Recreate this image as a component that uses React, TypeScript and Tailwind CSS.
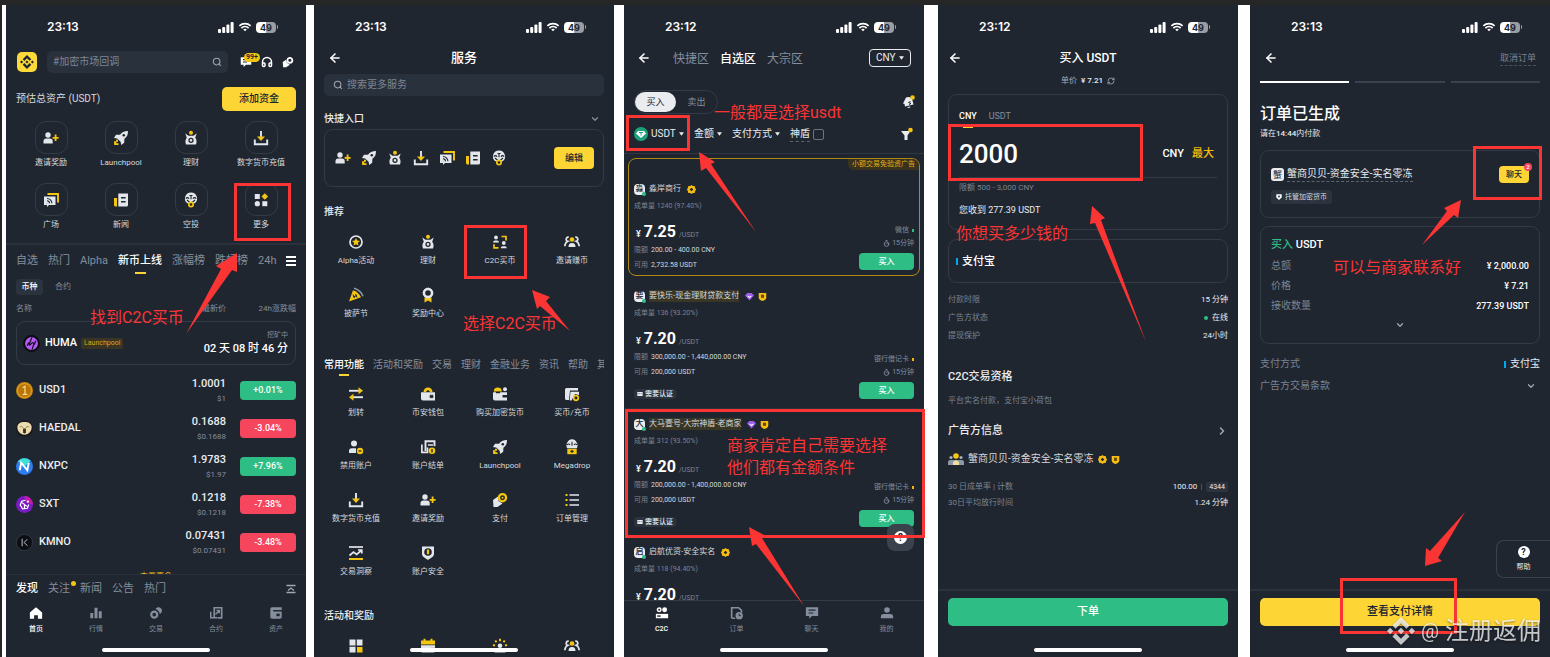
import type { ReactNode } from "react";
import { ArrowLeft, ChevronDown, ChevronRight, Headphones, RefreshCw, Search, Timer } from "lucide-react";
import { SiBinance } from "react-icons/si";

const W = "#e3e6ea";
const Y = "#f5c611";
const D = "#202630";

const glyphs: Record<string, ReactNode> = {
    invite: (
        <>
            <circle cx="5" cy="5" r="2.7" fill={W} />
            <path d="M0.5 13.5v-2.2a2.8 2.8 0 0 1 2.8-2.8h3.6a2.8 2.8 0 0 1 2.8 2.8v2.2z" fill={W} />
            <path d="M12.6 4.6v6.4M9.6 7.8h6" stroke={Y} strokeWidth="1.8" />
        </>
    ),
    rocket: (
        <>
            <path d="M15 1c-4 0-6 1.2-8 3.8L3 4.8 1 8l3.2.4 3.4 3.4.6 3.2 3-2.200.2-4C14 6.800 15 5 15 1z" fill={W} />
            <circle cx="10.8" cy="5.2" r="1.3" fill={D} />
            <path d="M1 11.2h2v-1.5h2v2h-1.6v1.6H5.500v1.700H1.200z" fill={Y} />
        </>
    ),
    bag: (
        <>
            <circle cx="8" cy="2.7" r="2" fill={Y} />
            <path d="M2.3 3.5l3.2 2.3h5l3.2-2.3-1.5 4.2c1.6 1.6 1.7 4.7.8 6.8H3c-.9-2.100-.8-5.200.8-6.800z" fill={W} />
            <circle cx="8" cy="10.3" r="2" fill={W} stroke={D} strokeWidth="1.3" />
        </>
    ),
    deposit: (
        <>
            <path d="M1.8 9.5v4.7h12.4V9.500" fill="none" stroke={W} strokeWidth="1.9" />
            <path d="M8 1v6" stroke={W} strokeWidth="1.9" />
            <path d="M4 6.5h8L8 11z" fill={Y} />
        </>
    ),
    feed: (
        <>
            <path d="M4.5 2h10.5v8.5" fill="none" stroke={Y} strokeWidth="1.9" />
            <path d="M1 4.5h11.5v8.5H6l-2 2v-2H1z" fill={W} />
            <path d="M4 11.3l.1-.1M4 8.8a2.4 2.4 0 0 1 2.5 2.5M4 6.5a4.8 4.8 0 0 1 4.9 4.8" fill="none" stroke={D} strokeWidth="1.1" />
        </>
    ),
    news: (
        <>
            <path d="M1 6h3v8.5H2.500A1.500 1.500 0 0 1 1 13z" fill={Y} />
            <path d="M5.3 1.5H15v11.500a1.500 1.500 0 0 1-1.500 1.500H5.300z" fill={W} />
            <path d="M8 5.8h4.6M8 9.800h4.600" stroke={D} strokeWidth="1.5" />
        </>
    ),
    airdrop: (
        <>
            <path d="M8 .5a6 6 0 0 1 3.8 10.7H4.200A6 6 0 0 1 8 .5z" fill={W} />
            <path d="M2.8 6.7c1.2-1.4 2.4-1.4 3.2 0M10 6.7c.8-1.4 2-1.4 3.2 0M6.5 3.5h3M8 3.3v4M4 8l2.8 2.5M12 8l-2.8 2.5" fill="none" stroke={D} strokeWidth="1.1" />
            <circle cx="8" cy="12.5" r="2.2" fill={D} stroke={Y} strokeWidth="1.7" />
        </>
    ),
    more: (
        <>
            <path d="M1.8 2h5v5h-5z" fill={W} />
            <circle cx="4.3" cy="11.7" r="2.6" fill={W} />
            <path d="M9.3 9.2h5v5h-5z" fill={W} />
            <path d="M11.8 1.2l3.3 3.3-3.3 3.3-3.3-3.3z" fill={Y} />
        </>
    ),
    alpha: (
        <>
            <circle cx="8" cy="8" r="6" fill="none" stroke={W} strokeWidth="1.7" />
            <path d="M8 4l1.2 2.6 2.8.3-2.1 1.9.6 2.8L8 10.200l-2.500 1.400.6-2.800L4 6.900l2.800-.3z" fill={Y} />
        </>
    ),
    c2c: (
        <>
            <circle cx="4" cy="3.5" r="1.9" fill={W} />
            <path d="M1 8.5a2 2 0 0 1 2-2h2a2 2 0 0 1 2 2z" fill={W} />
            <circle cx="11.8" cy="9" r="1.9" fill={W} />
            <path d="M8.8 14.2a2 2 0 0 1 2-2h2a2 2 0 0 1 2 2z" fill={W} />
            <path d="M9.5 2.5h4.5v4M6.5 13.8H2v-3.500" fill="none" stroke={Y} strokeWidth="1.7" />
        </>
    ),
    group: (
        <>
            <circle cx="8" cy="5.5" r="2.3" fill={Y} />
            <path d="M4.5 13c0-2.6 1-4 3.5-4s3.5 1.4 3.5 4z" fill={W} />
            <path d="M4.8 3.3a2 2 0 0 0-1 4C2 8 1 10 .8 12.3M11.2 3.3a2 2 0 0 1 1 4c1.8.7 2.8 2.7 3 5" fill="none" stroke={W} strokeWidth="1.7" />
        </>
    ),
    pizza: (
        <>
            <path d="M5 3.2L1 14.500l12-4.200C11.500 7 8.500 4.200 5 3.200z" fill={Y} />
            <path d="M6 1.2c4 1 7.5 4.2 9 8" fill="none" stroke="#8d97a6" strokeWidth="1.6" />
            <path d="M5 7.5l1.5 3.5M7.5 7l1.5 3.5M5 10l4-1.5" stroke={D} strokeWidth="1" />
        </>
    ),
    medal: (
        <>
            <path d="M4.5 10.5h7v5L8 13.500l-3.500 2z" fill={Y} />
            <circle cx="8" cy="6" r="4" fill={D} stroke={W} strokeWidth="2.4" />
            <circle cx="8" cy="6" r="4.9" fill="none" stroke={W} strokeWidth="1" strokeDasharray="1.5 1" />
        </>
    ),
    transfer: (
        <>
            <path d="M1 4.8h10" stroke={W} strokeWidth="1.9" />
            <path d="M10.5 1.3L15 4.800l-4.500 3.500z" fill={Y} />
            <path d="M15 11.2H5" stroke={W} strokeWidth="1.9" />
            <path d="M5.5 7.7L1 11.200l4.500 3.500z" fill={Y} />
        </>
    ),
    wallet: (
        <>
            <path d="M3.5 6a4.5 4.5 0 0 1 9 0" fill={Y} />
            <path d="M1 6.2h14v8.3H3a2 2 0 0 1-2-2z" fill={W} />
            <path d="M6.5 6a1.5 1.5 0 0 1 3 0M10 9.2h3v2.5h-3z" fill={D} stroke={D} strokeWidth=".6" />
        </>
    ),
    buy: (
        <>
            <path d="M1.8 5.5a4 4 0 0 1 8 0" fill={Y} />
            <circle cx="13" cy="3.2" r="2" fill={W} />
            <path d="M1 6.3h14v8.2H3a2 2 0 0 1-2-2z" fill={W} />
            <path d="M10.5 9h4.5v2.6h-4.500zM4 5.800h4v1.500H4z" fill={D} />
        </>
    ),
    card: (
        <>
            <path d="M1 3.5A1.500 1.500 0 0 1 2.500 2H14v2.500H6l-1 9.500H2.500A1.500 1.500 0 0 1 1 12.500z" fill={W} />
            <path d="M6.5 5.8H15V9l-4-1-3.500 6.500H5.700z" fill={W} />
            <circle cx="12" cy="12" r="2.3" fill={D} stroke={Y} strokeWidth="1.7" />
        </>
    ),
    disable: (
        <>
            <circle cx="6" cy="4.5" r="3" fill={W} />
            <path d="M1 14v-2a2.8 2.8 0 0 1 2.8-2.8H8V14z" fill={W} />
            <circle cx="12" cy="12" r="3.2" fill={Y} />
            <path d="M10.5 12h3" stroke={D} strokeWidth="1.2" />
        </>
    ),
    statement: (
        <>
            <path d="M5.5 12V2.200h9v5" fill="none" stroke={W} strokeWidth="1.9" />
            <path d="M1.9 5.5v7.8h5.6V8.500M8 6h5" fill="none" stroke={W} strokeWidth="1.7" />
            <circle cx="12" cy="11.8" r="3.3" fill={Y} />
            <path d="M12 10v3.5" stroke={D} strokeWidth="1.3" />
        </>
    ),
    megadrop: (
        <>
            <path d="M8 .3a6 6 0 0 1 4.2 9.7H3.800A6 6 0 0 1 8 .3z" fill={W} />
            <path d="M2.8 6c1.2-1.3 2.4-1.3 3.2 0M10 6c.8-1.3 2-1.3 3.2 0M8 2.8v4" fill="none" stroke={D} strokeWidth="1.1" />
            <path d="M3 9.5h10V15.500H3z" fill={Y} stroke={D} strokeWidth=".6" />
            <path d="M8 10.8v3.2M6.4 12.4h3.2" stroke={D} strokeWidth="1.1" />
        </>
    ),
    pay: (
        <>
            <path d="M1 8l5-3.5.5 4.5 4 2.5L5.500 15H1.500z" fill={W} />
            <circle cx="10.5" cy="5.7" r="3.6" fill={D} stroke={Y} strokeWidth="2.3" />
            <circle cx="10.5" cy="5.7" r="1" fill={Y} />
        </>
    ),
    list: (
        <>
            <path d="M5.5 3h9.5M5.5 8h9.5M5.5 13h9.5" stroke={W} strokeWidth="1.7" />
            <path d="M1.5 3h2M1.5 8h2M1.5 13h2" stroke={Y} strokeWidth="1.9" />
        </>
    ),
    insight: (
        <>
            <path d="M1 2h14" stroke={W} strokeWidth="1.7" />
            <path d="M1.5 10.5l4-3.5 3.2 2.5 4.5-4M10 5h3.8v3.5" fill="none" stroke={W} strokeWidth="1.7" />
            <path d="M1 14h14" stroke={Y} strokeWidth="2" />
        </>
    ),
    shield: (
        <>
            <path d="M2 1.5h12v7.8c0 2.2-3.5 4.2-6 5.7-2.5-1.5-6-3.5-6-5.7z" fill={W} />
            <circle cx="8" cy="7" r="3.8" fill={D} />
            <path d="M8 4.5v4.7" stroke={Y} strokeWidth="2.2" />
        </>
    ),
    blocks: (
        <>
            <path d="M1.5 1.5h6v6h-6zM8.8 1.5h5.7v6H8.800zM1.500 8.800h6v5.700h-6z" fill={W} />
            <path d="M9 9h5.5v5.5H9z" fill={Y} />
        </>
    ),
    calendar: (
        <>
            <path d="M1 2.5h14v4H1zM3.500.8h2v3h-2zM10.500.8h2v3h-2z" fill={Y} />
            <path d="M1 7.2h14V13a1.500 1.500 0 0 1-1.500 1.500h-11A1.500 1.500 0 0 1 1 13z" fill={W} />
            <path d="M11 10.5h5" stroke={D} strokeWidth="1.2" />
        </>
    ),
    spark: (
        <>
            <path d="M8 .8v2.5M3.3 2.5l1.2 1.8M12.7 2.5l-1.2 1.8M1 6.8l2 .8M15 6.8l-2 .8" stroke={Y} strokeWidth="1.9" />
            <circle cx="8" cy="7.7" r="2.3" fill={W} />
            <path d="M2.5 14.5a2.5 2.5 0 0 1 2.5-2.8h6a2.5 2.5 0 0 1 2.5 2.8z" fill={W} />
        </>
    ),
    // bottom bar, follows the text colour
    home: <path d="M8 1.5l7 6V14.500h-4.800v-4H5.800v4H1V7.500z" fill="currentColor" />,
    market: <path d="M1.5 8h3.3v6H1.500zM6.300 2h3.400v12H6.300zM11.200 6h3.300v8h-3.300z" fill="currentColor" />,
    trade: (
        <>
            <circle cx="6" cy="9.8" r="3.4" fill="none" stroke="currentColor" strokeWidth="2.6" />
            <path d="M7.5 3.5a3.9 3.9 0 1 1 4.8 5.5c-.3-2.5-2.2-4.6-4.8-5.5z" fill="currentColor" />
        </>
    ),
    futures: (
        <>
            <path d="M6 12.5V2h8.500v11.500h-4" fill="none" stroke="currentColor" strokeWidth="1.9" />
            <path d="M2 6.5v7h8M7.5 9.5l4-4M8.5 5h3.3v3.3" fill="none" stroke="currentColor" strokeWidth="1.7" />
        </>
    ),
    assets: (
        <>
            <path d="M1.5 3.5a2 2 0 0 1 2-2h11v3H4.800v1.700h9.700v6.300a2 2 0 0 1-2 2h-9a2 2 0 0 1-2-2z" fill="currentColor" />
            <path d="M8.5 8.7h3.7v3H8.500z" fill={D} />
        </>
    ),
    people: (
        <>
            <circle cx="4.8" cy="4.3" r="2" fill="none" stroke="currentColor" strokeWidth="1.7" />
            <circle cx="11" cy="4.3" r="2.8" fill="currentColor" />
            <path d="M1 9h14v5H1z" fill="currentColor" />
            <path d="M2.5 10.7h4v1.6h-4z" fill={D} />
        </>
    ),
    orders: (
        <>
            <path d="M1.9 14V2h8l3.200 3v2.500M1.900 14h4" fill="none" stroke="currentColor" strokeWidth="1.9" />
            <circle cx="10.5" cy="11" r="4.2" fill="currentColor" />
            <path d="M10.5 8.8V11h2" fill="none" stroke={D} strokeWidth="1.1" />
        </>
    ),
    chat: (
        <>
            <path d="M1 1.5h14v10H8l-3.200 3v-3H1z" fill="currentColor" />
            <path d="M4 4.8h8M4 8h5.5" stroke={D} strokeWidth="1.4" />
        </>
    ),
    me: (
        <>
            <circle cx="8" cy="4.5" r="3.2" fill="currentColor" />
            <path d="M1 14v-2a3 3 0 0 1 3-3h8a3 3 0 0 1 3 3v2z" fill="currentColor" />
        </>
    ),
};

function Glyph({ name, className = "size-4" }: { name: string; className?: string }) {
    return (
        <svg viewBox="0 0 16 16" className={`${className} shrink-0`} aria-hidden="true">
            {glyphs[name]}
        </svg>
    );
}

function StatusBar({ time }: { time: string }) {
    return (
        <div className="flex h-11 shrink-0 items-center justify-between pl-[41px] pr-7 text-white">
            <span className="font-['Inter',sans-serif] text-[12px] font-semibold leading-4">{time}</span>
            <div className="flex items-center gap-1">
                <svg viewBox="0 0 16 11" className="h-[11px] w-4" fill="currentColor">
                    <rect x="0" y="7" width="3" height="4" rx="1" />
                    <rect x="4.2" y="5" width="3" height="6" rx="1" />
                    <rect x="8.4" y="2.5" width="3" height="8.5" rx="1" />
                    <rect x="12.6" y="0" width="3" height="11" rx="1" />
                </svg>
                <svg viewBox="0 0 14 11" className="h-[10px] w-[14px]" fill="none" stroke="currentColor" strokeWidth="1.9">
                    <path d="M.8 4.2a9 9 0 0 1 12.4 0M3 6.7a5.8 5.8 0 0 1 8 0" />
                    <path d="M7 10.2L5 8.200a3 3 0 0 1 4 0z" fill="currentColor" stroke="none" />
                </svg>
                <span className="flex items-center">
                    <span className="flex h-[11px] w-5 items-center justify-center rounded-[4px] bg-gradient-to-r from-white from-50% to-[#9a9da3] to-50% font-['Inter',sans-serif] text-[9px] font-bold leading-[11px] text-[#202630]">
                        49
                    </span>
                    <span className="ml-px h-1 w-px rounded-r bg-[#9a9da3]" />
                </span>
            </div>
        </div>
    );
}

function Phone({ time, label, className = "", children }: { time: string; label: string; className?: string; children: ReactNode }) {
    return (
        <section aria-label={label} className={`relative flex min-w-0 flex-1 flex-col bg-[#202630] ${className}`}>
            <StatusBar time={time} />
            {children}
        </section>
    );
}

function BackButton() {
    return (
        <button aria-label="返回" className="text-white">
            <ArrowLeft className="size-[14px]" strokeWidth={2.6} />
        </button>
    );
}

function HomeBar() {
    return <div className="mx-auto h-1 w-[108px] rounded-full bg-white" />;
}

function RedBox({ className }: { className: string }) {
    return <div className={`pointer-events-none absolute z-20 border-[3px] border-[#fb3434] ${className}`} />;
}

function Note({ className, children }: { className: string; children: ReactNode }) {
    return (
        <p className={`absolute z-20 whitespace-nowrap text-[16px] leading-[22px] text-[#fb3434] ${className}`}>{children}</p>
    );
}

function Arrows({ shapes }: { shapes: string[] }) {
    return (
        <svg className="pointer-events-none absolute inset-0 z-20 size-full overflow-visible" fill="#fb3434" aria-hidden="true">
            {shapes.map((s) => (
                <polygon key={s} points={s} />
            ))}
        </svg>
    );
}

function Caret() {
    return (
        <svg viewBox="0 0 6 4" className="pointer-events-none h-1 w-[5px]" fill="#eaecef">
            <path d="M0 0h6L3 4z" />
        </svg>
    );
}

function Dropdown({ label, value }: { label: string; value: string }) {
    return (
        <span className="flex items-center gap-[3px]">
            <select aria-label={label} className="appearance-none bg-transparent text-[10px] leading-[14px] text-[#eaecef]">
                <option>{value}</option>
            </select>
            <Caret />
        </span>
    );
}

function BottomNav({ items, cols }: { items: [string, string][]; cols: string }) {
    return (
        <nav className={`grid ${cols}`}>
            {items.map(([icon, label], i) => (
                <a key={label} href="#" className={`flex flex-col items-center ${i === 0 ? "font-medium text-white" : "text-[#848e9c]"}`}>
                    <Glyph name={icon} className="size-[14px]" />
                    <span className="mt-1 text-[7px] leading-[10px]">{label}</span>
                </a>
            ))}
        </nav>
    );
}

/* ---------- screen 1: home ---------- */

const quickEntries: [string, string][] = [
    ["invite", "邀请奖励"],
    ["rocket", "Launchpool"],
    ["bag", "理财"],
    ["deposit", "数字货币充值"],
    ["feed", "广场"],
    ["news", "新闻"],
    ["airdrop", "空投"],
    ["more", "更多"],
];

const coins = [
    { name: "USD1", price: "1.0001", usd: "$1", change: "+0.01%" },
    { name: "HAEDAL", price: "0.1688", usd: "$0.1688", change: "-3.04%" },
    { name: "NXPC", price: "1.9783", usd: "$1.97", change: "+7.96%" },
    { name: "SXT", price: "0.1218", usd: "$0.1218", change: "-7.38%" },
    { name: "KMNO", price: "0.07431", usd: "$0.07431", change: "-3.48%" },
];

const coinLogos: Record<string, ReactNode> = {
    HUMA: (
        <>
            <circle cx="9" cy="9" r="9" fill="#0c0c14" />
            <circle cx="9" cy="9" r="6.8" fill="#b45cf0" />
            <path d="M9.5 2.5L7 8.500c-1 2.500 0 3 1.500 1s4-2 2.500 1.500l-1.500 4.500M4.500 11.500l1.500-3.500M12 10l1.500-4" stroke="#141020" strokeWidth="1.3" fill="none" />
        </>
    ),
    USD1: (
        <>
            <circle cx="9" cy="9" r="9" fill="#c8860d" />
            <circle cx="9" cy="9" r="7.3" fill="#b97606" stroke="#e8ad3a" strokeWidth=".8" />
            <path d="M7 6l2.5-1.5V13M7 13h5" stroke="#f9dc8a" strokeWidth="1.3" fill="none" />
        </>
    ),
    HAEDAL: (
        <>
            <circle cx="9" cy="9" r="9" fill="#1a1a1a" />
            <path d="M1.5 7c.5-3.500 3.500-5 7.500-5s7 1.500 7.500 5c.5 5-3 8.500-7.500 8.500S1 12 1.500 7z" fill="#ecdcb0" />
            <path d="M4 7.5c2-1.5 3-.5 3.5 1M14 7.5c-2-1.5-3-.5-3.5 1" stroke="#8c7a52" strokeWidth=".9" fill="none" />
            <path d="M7.5 9h3v4l-1.5 1.5-1.5-1.5z" fill="#3a3020" />
        </>
    ),
    NXPC: (
        <>
            <circle cx="9" cy="9" r="9" fill="#2d7cf0" />
            <path d="M2 3.5A9 9 0 0 1 15.500 3L9 9z" fill="#3fe0d0" />
            <path d="M4 13l1.5-8 6.5 8L13.500 5" stroke="#fff" strokeWidth="2" fill="none" />
        </>
    ),
    SXT: (
        <>
            <circle cx="9" cy="9" r="9" fill="#7a1cc4" />
            <path d="M9 0a9 9 0 0 1 9 9c-5 0-9-4-9-9z" fill="#c61aa8" />
            <path d="M10 4.5L6 5.500 4.500 9.500l2.500 4 5-.5 1.500-4M6.500 7l5 4M9 9v4" stroke="#fff" strokeWidth="1.3" fill="none" />
            <circle cx="12.5" cy="6" r="1.2" fill="#fff" />
        </>
    ),
    KMNO: (
        <>
            <circle cx="9" cy="9" r="8.5" fill="#0b0e12" stroke="#3a414c" strokeWidth=".8" />
            <path d="M6.5 5v8M12 5.5L8.500 9l3.800 3.500" stroke="#c8ccd2" strokeWidth="1" fill="none" />
        </>
    ),
};

function CoinLogo({ name }: { name: string }) {
    return (
        <svg viewBox="0 0 18 18" className="size-[17px] shrink-0" aria-hidden="true">
            {coinLogos[name]}
        </svg>
    );
}

function HomeScreen() {
    return (
        <Phone time="23:13" label="首页" className="ml-1">
            <div className="flex min-h-0 flex-1 flex-col overflow-hidden">
                <header className="mt-0.5 flex shrink-0 items-center pl-[11px] pr-3">
                    <span className="flex size-5 items-center justify-center rounded-[5px] bg-[#fdd93a] text-[#202630]">
                        <SiBinance className="size-[14px]" />
                    </span>
                    <label className="ml-[10px] mr-3 flex h-[22px] min-w-0 flex-1 items-center rounded-[5px] bg-[#29313d] px-1.5">
                        <input
                            aria-label="搜索"
                            placeholder="#加密市场回调"
                            className="min-w-0 flex-1 bg-transparent text-[10px] leading-[14px] placeholder:text-[#7d8694]"
                        />
                        <Search className="size-[10px] text-[#a0a8b4]" strokeWidth={2.5} />
                    </label>
                    <div className="flex items-center gap-[9px] text-white">
                        <button aria-label="消息" className="relative">
                            <Glyph name="chat" className="size-3" />
                            <span className="absolute -top-[3px] left-1 flex h-[9px] w-4 items-center justify-center rounded-full bg-[#f5c611] text-[7px] font-bold leading-[9px] text-[#202630]">
                                99+
                            </span>
                        </button>
                        <button aria-label="客服">
                            <Headphones className="size-3" strokeWidth={3} />
                        </button>
                        <button aria-label="支付">
                            <svg viewBox="0 0 16 16" className="size-3">
                                <path d="M1 8l4.5-3 1 4 4 2.5L5.500 15H1.500z" fill="#fff" />
                                <circle cx="10.5" cy="5.7" r="3.3" fill={D} stroke="#fff" strokeWidth="2.4" />
                            </svg>
                        </button>
                    </div>
                </header>

                <div className="mt-[14px] flex shrink-0 items-center justify-between px-[10px]">
                    <span className="text-[10px] leading-[14px] text-[#d5d9df]">预估总资产 (USDT)</span>
                    <button className="h-6 w-[74px] rounded-[5px] bg-[#fdd535] text-[10px] font-medium leading-[14px] text-[#202630]">
                        添加资金
                    </button>
                </div>

                <div className="mt-[10px] grid shrink-0 grid-cols-4 gap-y-[15px] px-[10px]">
                    {quickEntries.map(([icon, label]) => (
                        <a key={label} href="#" className="flex flex-col items-center text-[#d5d9df]">
                            <span className="flex size-[33px] items-center justify-center rounded-[11px] border border-[#333b47]">
                                <Glyph name={icon} />
                            </span>
                            <span className="mt-1 whitespace-nowrap text-[8px] leading-[10px]">{label}</span>
                        </a>
                    ))}
                </div>

                <div className="mt-[13px] h-0.5 shrink-0 bg-[#2a313c]" />

                <div className="mt-[9px] flex shrink-0 items-start gap-2 px-[10px]">
                    <div className="flex min-w-0 flex-1 gap-[10px] overflow-hidden whitespace-nowrap text-[11px] leading-[14px] text-[#848e9c]">
                        <button className="self-start">自选</button>
                        <button className="self-start">热门</button>
                        <button className="self-start">Alpha</button>
                        <button className="flex flex-col items-center font-medium text-white">
                            新币上线
                            <span className="mt-1 h-0.5 w-[11px] bg-[#fcd535]" />
                        </button>
                        <button className="self-start">涨幅榜</button>
                        <button className="self-start">跌幅榜</button>
                        <button className="self-start">24h</button>
                    </div>
                    <button aria-label="菜单" className="mt-0.5 flex w-[10px] flex-col gap-0.5">
                        <span className="h-0.5 bg-white" />
                        <span className="h-0.5 bg-white" />
                        <span className="h-0.5 bg-white" />
                    </button>
                </div>

                <div className="mt-[5px] flex shrink-0 items-center gap-3 px-[10px] text-[8px] leading-[10px]">
                    <button className="h-4 w-[27px] rounded-[4px] bg-[#2b333f] font-medium text-white">币种</button>
                    <button className="text-[#848e9c]">合约</button>
                </div>

                <div className="mt-2 shrink-0 px-[10px]">
                    <table className="w-full table-fixed">
                        <thead className="text-[8px] leading-3 text-[#848e9c]">
                            <tr>
                                <th className="p-0 pb-1.5 text-left font-normal">名称</th>
                                <th className="w-[80px] p-0 pb-1.5 text-right font-normal">最新价</th>
                                <th className="w-[70px] p-0 pb-1.5 text-right font-normal">24h涨跌幅</th>
                            </tr>
                        </thead>
                        <tbody>
                            <tr>
                                <td colSpan={3} className="p-0 pb-1.5">
                                    <div className="flex h-11 items-center rounded-[9px] border border-[#333b47] pl-1.5 pr-[7px]">
                                        <CoinLogo name="HUMA" />
                                        <span className="ml-[5px] text-[11px] font-medium leading-[14px] text-white">HUMA</span>
                                        <span className="ml-1 rounded-[2px] bg-[#3a3424] px-[3px] text-[7px] leading-[11px] text-[#d5aa10]">Launchpool</span>
                                        <span className="ml-auto flex flex-col items-end whitespace-nowrap">
                                            <span className="text-[7px] leading-[10px] text-[#848e9c]">挖矿中</span>
                                            <span className="mt-0.5 text-[11px] font-medium leading-[14px] text-white">02 天 08 时 46 分</span>
                                        </span>
                                    </div>
                                </td>
                            </tr>
                            {coins.map((c) => (
                                <tr key={c.name} className="h-[38px]">
                                    <td className="p-0">
                                        <span className="flex items-center gap-1.5 text-[11px] font-medium leading-[14px] text-[#eaecef]">
                                            <CoinLogo name={c.name} />
                                            {c.name}
                                        </span>
                                    </td>
                                    <td className="p-0 pt-0.5 text-right">
                                        <span className="block text-[11px] font-medium leading-[14px] text-[#eaecef]">{c.price}</span>
                                        <span className="mt-0.5 block text-[8px] leading-3 text-[#848e9c]">{c.usd}</span>
                                    </td>
                                    <td className="p-0">
                                        <span
                                            className={`ml-auto flex h-[19px] w-14 items-center justify-center rounded-[4px] text-[9px] font-medium leading-3 text-white ${
                                                c.change[0] === "+" ? "bg-[#2ebd85]" : "bg-[#f6465d]"
                                            }`}
                                        >
                                            {c.change}
                                        </span>
                                    </td>
                                </tr>
                            ))}
                        </tbody>
                    </table>
                </div>
                <a href="#" className="mx-auto mt-[10px] shrink-0 text-[8px] leading-3 text-[#f0b90b]">查看更多</a>
            </div>

            <footer className="shrink-0 border-t border-[#2a313c] bg-[#202630] pb-[5px]">
                <div className="mt-[7px] flex items-center gap-[10px] px-[10px] text-[11px] leading-[14px] text-[#848e9c]">
                    <button className="font-medium text-white">发现</button>
                    <button className="relative">
                        关注
                        <span className="absolute -right-1.5 -top-px size-[5px] rounded-full bg-[#f5c611]" />
                    </button>
                    <button>新闻</button>
                    <button>公告</button>
                    <button>热门</button>
                    <button aria-label="回到顶部" className="ml-auto">
                        <svg viewBox="0 0 10 10" className="size-[10px]" fill="none" stroke="#a0a8b4" strokeWidth="1.3">
                            <path d="M.5 1.5h9M.5 8.5h9M2 6.5l3-2.5 3 2.5" />
                        </svg>
                    </button>
                </div>
                <div className="mb-[14px] mt-[10px]">
                    <BottomNav
                        cols="grid-cols-5"
                        items={[
                            ["home", "首页"],
                            ["market", "行情"],
                            ["trade", "交易"],
                            ["futures", "合约"],
                            ["assets", "资产"],
                        ]}
                    />
                </div>
                <HomeBar />
            </footer>

            <RedBox className="left-[228px] top-[178px] h-[58px] w-[57px]" />
            <Note className="left-[84px] top-[302px]">找到C2C买币</Note>
            <Arrows shapes={["231,248 231,267 226,265 180,329 215,264 210,261"]} />
        </Phone>
    );
}

/* ---------- screen 2: services ---------- */

const recommended: [string, string][] = [
    ["alpha", "Alpha活动"],
    ["bag", "理财"],
    ["c2c", "C2C买币"],
    ["group", "邀请赚币"],
    ["pizza", "披萨节"],
    ["medal", "奖励中心"],
];

const common: [string, string][] = [
    ["transfer", "划转"],
    ["wallet", "币安钱包"],
    ["buy", "购买加密货币"],
    ["card", "买币/充币"],
    ["disable", "禁用账户"],
    ["statement", "账户结单"],
    ["rocket", "Launchpool"],
    ["megadrop", "Megadrop"],
    ["deposit", "数字货币充值"],
    ["invite", "邀请奖励"],
    ["pay", "支付"],
    ["list", "订单管理"],
    ["insight", "交易洞察"],
    ["shield", "账户安全"],
];

function ServiceGrid({ items, className }: { items: [string, string][]; className: string }) {
    return (
        <div className={`grid shrink-0 grid-cols-4 gap-y-[21px] px-1.5 ${className}`}>
            {items.map(([icon, label]) => (
                <a key={label} href="#" className="flex flex-col items-center text-[#d5d9df]">
                    <Glyph name={icon} />
                    <span className="mt-1.5 whitespace-nowrap text-[8px] leading-[10px]">{label}</span>
                </a>
            ))}
        </div>
    );
}

function ServicesScreen() {
    return (
        <Phone time="23:13" label="服务" className="ml-2">
            <div className="flex min-h-0 flex-1 flex-col overflow-hidden">
                <header className="grid h-[18px] shrink-0 grid-cols-3 items-center px-[14px]">
                    <BackButton />
                    <h1 className="text-center text-[13px] font-medium leading-[18px] text-white">服务</h1>
                </header>
                <label className="mx-[10px] mt-[7px] flex h-[22px] shrink-0 items-center gap-1 rounded-[5px] bg-[#29313d] px-[9px]">
                    <Search className="size-[10px] text-[#a0a8b4]" strokeWidth={2.5} />
                    <input
                        aria-label="搜索服务"
                        placeholder="搜索更多服务"
                        className="min-w-0 flex-1 bg-transparent text-[10px] leading-[14px] placeholder:text-[#7d8694]"
                    />
                </label>

                <div className="mt-[17px] flex h-3 shrink-0 items-center justify-between pl-[10px] pr-[14px]">
                    <h2 className="text-[10px] font-medium leading-3 text-[#eaecef]">快捷入口</h2>
                    <ChevronDown className="size-[10px] text-[#848e9c]" strokeWidth={3} />
                </div>
                <div className="mx-[10px] mt-1 flex h-[58px] shrink-0 items-center gap-[10px] rounded-[9px] border border-[#333b47] pl-[10px] pr-[9px]">
                    {["invite", "rocket", "bag", "deposit", "feed", "news", "airdrop"].map((icon) => (
                        <Glyph key={icon} name={icon} />
                    ))}
                    <button className="ml-auto h-[22px] w-10 rounded-[4px] bg-[#fdd535] text-[9px] font-medium leading-3 text-[#202630]">编辑</button>
                </div>

                <h2 className="mt-[19px] shrink-0 px-[10px] text-[10px] font-medium leading-3 text-[#eaecef]">推荐</h2>
                <ServiceGrid items={recommended} className="mt-4" />

                <div className="mx-[10px] mt-10 flex shrink-0 gap-[9px] overflow-hidden whitespace-nowrap text-[10px] leading-3 text-[#848e9c]">
                    <button className="flex flex-col items-center font-medium text-white">
                        常用功能
                        <span className="mt-[3px] h-0.5 w-[10px] bg-[#fcd535]" />
                    </button>
                    {["活动和奖励", "交易", "理财", "金融业务", "资讯", "帮助", "其"].map((t) => (
                        <button key={t} className="self-start">
                            {t}
                        </button>
                    ))}
                </div>
                <ServiceGrid items={common} className="mt-[10px]" />

                <h2 className="mt-[33px] shrink-0 px-[10px] text-[10px] font-medium leading-3 text-[#eaecef]">活动和奖励</h2>
                <div className="mt-4 grid shrink-0 grid-cols-4 justify-items-center px-1.5">
                    {["blocks", "calendar", "spark", "group"].map((icon) => (
                        <Glyph key={icon} name={icon} />
                    ))}
                </div>
            </div>
            <div className="absolute inset-x-0 bottom-[5px]">
                <HomeBar />
            </div>

            <RedBox className="left-[150px] top-[220px] h-[54px] w-[63px]" />
            <Note className="left-[149px] top-[308px]">选择C2C买币</Note>
            <Arrows shapes={["218,285 236,292 232,296 256,326 226,301 223,304"]} />
        </Phone>
    );
}

/* ---------- screen 3: C2C market ---------- */

type OfferData = {
    name: string;
    badges: string[];
    marked?: boolean;
    orders: string;
    price: string;
    terms?: { limit: string; available: string; method: string; tick: string };
    verify?: boolean;
};

const offers: OfferData[] = [
    {
        name: "淼岸商行",
        badges: ["coin"],
        orders: "1240 (97.40%)",
        price: "7.25",
        terms: { limit: "200.00 - 400.00 CNY", available: "2,732.58 USDT", method: "微信", tick: "bg-[#2ebd85]" },
    },
    {
        name: "要快乐-现金理财贷款支付",
        badges: ["gem", "shield"],
        marked: true,
        orders: "136 (93.20%)",
        price: "7.20",
        terms: { limit: "300,000.00 - 1,440,000.00 CNY", available: "200,000 USDT", method: "银行借记卡", tick: "bg-[#f0b90b]" },
        verify: true,
    },
    {
        name: "大马壹号-大宗神盾-老商家",
        badges: ["gem", "shield"],
        marked: true,
        orders: "312 (93.50%)",
        price: "7.20",
        terms: { limit: "200,000.00 - 1,400,000.00 CNY", available: "200,000 USDT", method: "银行借记卡", tick: "bg-[#f0b90b]" },
        verify: true,
    },
    { name: "启航优资-安全实名", badges: ["coin"], orders: "118 (94.40%)", price: "7.20" },
];

const badgeShapes: Record<string, ReactNode> = {
    coin: (
        <>
            <path d="M5 0l1.5 1h2l.5 2 1 2-1 2-.5 2h-2L5 10 3.500 9h-2L1 7 0 5l1-2 .5-2h2z" fill="#f5bd12" />
            <path d="M5 3l2 2-2 2-2-2z" fill={D} />
        </>
    ),
    gem: (
        <>
            <path d="M2.5 1h5L10 4 5 9.500 0 4z" fill="#9b5cf0" />
            <path d="M3 4.2l2 2 2-2" stroke="#fff" strokeWidth="1.2" fill="none" />
        </>
    ),
    shield: (
        <>
            <path d="M.8 1h8.4v5c0 2-2 3-4.2 4C2.800 9 .8 8 .8 6z" fill="#f5bd12" />
            <path d="M3.3 3h3.4v3.5H3.300z" fill="#6b4a00" />
        </>
    ),
};

function Badge({ kind }: { kind: string }) {
    return (
        <svg viewBox="0 0 10 10" className="size-[9px] shrink-0" aria-hidden="true">
            {badgeShapes[kind]}
        </svg>
    );
}

function Offer({ offer }: { offer: OfferData }) {
    const { terms } = offer;
    return (
        <>
            <div className="flex h-3 items-center gap-1 text-[8px] leading-3 text-[#d5d9df]">
                <span className="relative flex size-[11px] items-center justify-center rounded-[4px] bg-[#eaecef] text-[8px] font-medium text-[#202630]">
                    {offer.name[0]}
                    <span className="absolute -bottom-px -right-px size-1 rounded-full bg-[#2ebd85]" />
                </span>
                <span className={offer.marked ? "bg-[#3a3626]" : ""}>{offer.name}</span>
                <span className="flex gap-1 pl-0.5">
                    {offer.badges.map((b) => (
                        <Badge key={b} kind={b} />
                    ))}
                </span>
            </div>
            <p className="mt-1.5 text-[7px] leading-[10px] text-[#7a8391]">成单量 {offer.orders}</p>
            <div className="mt-3 flex items-end justify-between">
                <div>
                    <p className="flex h-[18px] items-baseline gap-[3px] pl-0.5 leading-[18px] text-white">
                        <span className="text-[9px] font-medium">¥</span>
                        <span className="text-[16px] font-bold">{offer.price}</span>
                        <span className="text-[7px] text-[#7a8391]">/USDT</span>
                    </p>
                    {terms && (
                        <>
                            <p className="mt-1 text-[7px] leading-[10px] text-[#d5d9df]">
                                <span className="mr-[3px] text-[#7a8391]">限额</span>
                                {terms.limit}
                            </p>
                            <p className="mt-[5px] text-[7px] leading-[10px] text-[#d5d9df]">
                                <span className="mr-[3px] text-[#7a8391]">可用</span>
                                {terms.available}
                            </p>
                        </>
                    )}
                    {offer.verify && (
                        <p className="mt-3 flex w-fit items-center gap-0.5 rounded-[3px] bg-[#2b333f] px-[3px] text-[7px] font-medium leading-[10px] text-[#eaecef]">
                            <svg viewBox="0 0 8 6" className="h-1 w-1.5" fill="#eaecef">
                                <path d="M0 0h8v6H0z" />
                                <path d="M1.5 2.5h2M5 2.5h1.5" stroke={D} />
                            </svg>
                            需要认证
                        </p>
                    )}
                </div>
                {terms && (
                    <div className="flex flex-col items-end text-[7px] leading-[10px] text-[#848e9c]">
                        <span className="flex items-center gap-[3px]">
                            {terms.method}
                            <span className={`h-[3px] w-0.5 ${terms.tick}`} />
                        </span>
                        <span className="mt-[3px] flex items-center gap-0.5">
                            <Timer className="size-[7px]" strokeWidth={3} />
                            15分钟
                        </span>
                        <button className="mt-[5px] h-[17px] w-[55px] rounded-[4px] bg-[#2ebd85] text-[8px] font-medium leading-[10px] text-white">买入</button>
                    </div>
                )}
            </div>
        </>
    );
}

function MarketScreen() {
    return (
        <Phone time="23:12" label="C2C 自选区" className="ml-[10px]">
            <header className="flex h-[18px] shrink-0 items-center px-[13px]">
                <BackButton />
                <div className="ml-[22px] flex gap-[11px] pt-px text-[12px] leading-[18px] text-[#848e9c]">
                    <button>快捷区</button>
                    <button className="font-medium text-white">自选区</button>
                    <button>大宗区</button>
                </div>
                <span className="ml-auto flex h-[18px] items-center rounded-[4px] border border-[#eaecef] px-1.5">
                    <Dropdown label="法币" value="CNY" />
                </span>
            </header>

            <div className="mt-[23px] flex shrink-0 items-center justify-between pl-[10px] pr-[9px]">
                <div className="flex h-6 items-center rounded-full border border-[#333b47] text-[9px] leading-3">
                    <button className="h-5 w-[41px] rounded-full bg-[#eaecef] text-[#202630]">买入</button>
                    <button className="w-[41px] text-[#848e9c]">卖出</button>
                </div>
                <button aria-label="提醒">
                    <svg viewBox="0 0 12 14" className="h-[14px] w-3">
                        <path d="M3 2.5C5.500 1 9 2.500 9.500 5.500l1 4L2 11.500 1.500 9 0 8.500z" fill="#eaecef" />
                        <path d="M4 12.2a2 2 0 0 0 3.5-.7z" fill="#eaecef" />
                        <path d="M7.5 6.5l-2 1 2.5 1-2 1" stroke={D} fill="none" />
                        <circle cx="9.5" cy="2.5" r="2.3" fill="#f5c611" />
                    </svg>
                </button>
            </div>

            <div className="mt-[13px] flex h-[14px] shrink-0 items-center whitespace-nowrap pl-[10px] pr-[11px]">
                <svg viewBox="0 0 14 14" className="mr-[3px] size-[14px]">
                    <circle cx="7" cy="7" r="7" fill="#1ba27a" />
                    <path d="M4 4h6l2 2.5L7 11 2 6.500z" fill="#fff" />
                    <path d="M5 5.5h4M7 5.5v3" stroke="#1ba27a" />
                </svg>
                <div className="flex items-center gap-[10px]">
                    <Dropdown label="币种" value="USDT" />
                    <Dropdown label="金额" value="金额" />
                    <Dropdown label="支付方式" value="支付方式" />
                    <label className="flex items-center gap-[3px] text-[10px] leading-[14px] text-[#eaecef]">
                        <span className="border-b border-dashed border-[#5c6673]">神盾</span>
                        <input type="checkbox" className="size-[11px] appearance-none rounded-[2px] border border-[#6b7480]" />
                    </label>
                </div>
                <button aria-label="筛选" className="ml-auto">
                    <svg viewBox="0 0 12 14" className="h-[14px] w-3">
                        <path d="M0 4h9.5L6.500 8.500V13H3.500V8.500z" fill="#eaecef" />
                        <circle cx="9.5" cy="3" r="2.3" fill="#f5c611" />
                    </svg>
                </button>
            </div>

            <div className="relative mt-3 flex min-h-0 flex-1 flex-col border-t border-[#2f3742]">
                <div className="min-h-0 flex-1 overflow-hidden">
                    <article className="relative mx-1 mt-1 rounded-[8px] border border-[#b08a10] px-[5px] pb-[5px] pt-6">
                        <span className="absolute right-0 top-0 rounded-bl-[6px] rounded-tr-[7px] bg-[#39321f] px-1 text-[7px] leading-[11px] text-[#e0b010]">
                            小额交易免验资广告
                        </span>
                        <Offer offer={offers[0]} />
                    </article>
                    <div className="mt-[5px]">
                        {offers.slice(1).map((o) => (
                            <article key={o.name} className="border-b border-[#2a313c] px-[10px] py-[9px]">
                                <Offer offer={o} />
                            </article>
                        ))}
                    </div>
                </div>
                <button
                    aria-label="帮助"
                    className="absolute bottom-[49px] right-[10px] flex size-[27px] items-center justify-center rounded-[8px] bg-[#3a424e]"
                >
                    <span className="flex size-[13px] items-center justify-center rounded-full bg-white text-[10px] font-bold leading-3 text-[#202630]">?</span>
                </button>
            </div>

            <footer className="shrink-0 border-t border-[#333b47] pb-[5px] pt-[5px]">
                <div className="mb-[14px]">
                    <BottomNav
                        cols="grid-cols-4"
                        items={[
                            ["people", "C2C"],
                            ["orders", "订单"],
                            ["chat", "聊天"],
                            ["me", "我的"],
                        ]}
                    />
                </div>
                <HomeBar />
            </footer>

            <RedBox className="left-0.5 top-[110px] h-9 w-16" />
            <RedBox className="left-px top-[404px] h-[129px] w-[300px]" />
            <Note className="left-[90px] top-[97px]">一般都是选择usdt</Note>
            <Note className="left-[103px] top-[430px]">
                商家肯定自己需要选择
                <br />
                他们都有金额条件
            </Note>
            <Arrows
                shapes={["75,147 91,157 87,159 132,227 82,163 77,166", "125,522 142,531 138,533 180,601 132,539 128,541"]}
            />
        </Phone>
    );
}

/* ---------- screen 4: buy form ---------- */

function InfoRow({ label, children }: { label: string; children: ReactNode }) {
    return (
        <div className="flex items-center justify-between text-[8px] leading-[10px]">
            <dt className="text-[#7a8391]">{label}</dt>
            <dd className="flex items-center gap-1 text-[#eaecef]">{children}</dd>
        </div>
    );
}

function BuyScreen() {
    return (
        <Phone time="23:12" label="买入 USDT" className="ml-[14px]">
            <div className="flex min-h-0 flex-1 flex-col overflow-hidden px-[10px]">
                <header className="grid h-[18px] shrink-0 grid-cols-3 items-center">
                    <BackButton />
                    <h1 className="whitespace-nowrap text-center text-[12px] font-medium leading-[18px] text-white">买入 USDT</h1>
                </header>
                <p className="mt-[9px] flex items-center justify-center gap-1 text-[8px] leading-[10px] text-[#a0a8b4]">
                    单价 <span className="font-medium text-[#eaecef]">¥ 7.21</span>
                    <RefreshCw className="size-2" strokeWidth={2.5} />
                </p>

                <div className="mt-2 shrink-0 rounded-[9px] border border-[#333b47] px-[10px] pb-[13px] pt-4">
                    <div className="flex gap-3 text-[9px] leading-[10px] text-[#848e9c]">
                        <button className="flex flex-col items-center font-medium text-white">
                            CNY
                            <span className="mt-[5px] h-0.5 w-[10px] bg-[#fcd535]" />
                        </button>
                        <button className="self-start">USDT</button>
                    </div>
                    <div className="mt-3 flex h-7 items-center text-[11px] leading-[14px]">
                        <input
                            aria-label="金额"
                            defaultValue="2000"
                            className="min-w-0 flex-1 bg-transparent text-[26px] font-medium leading-7 text-white"
                        />
                        <span className="font-medium text-white">CNY</span>
                        <button className="ml-2 mr-[3px] font-medium text-[#f0b90b]">最大</button>
                    </div>
                    <div className="mt-[9px] h-px bg-[#333b47]" />
                    <p className="mt-[5px] text-[8px] leading-[10px] text-[#7a8391]">限额 500 - 3,000 CNY</p>
                    <p className="mt-[11px] text-[9px] leading-3 text-[#eaecef]">您收到 277.39 USDT</p>
                </div>

                <div className="mt-[9px] flex h-11 shrink-0 items-center gap-1 rounded-[9px] border border-[#333b47] px-[7px] pt-px text-[11px] font-medium leading-[14px] text-white">
                    <span className="h-[7px] w-0.5 bg-[#02a9f1]" />
                    支付宝
                </div>

                <dl className="mt-3 flex flex-col gap-2">
                    <InfoRow label="付款时限">15 分钟</InfoRow>
                    <InfoRow label="广告方状态">
                        <span className="size-1 rounded-full bg-[#2ebd85]" />
                        在线
                    </InfoRow>
                    <InfoRow label="提现保护">24小时</InfoRow>
                </dl>

                <h2 className="mt-[29px] text-[11px] font-medium leading-[14px] text-[#eaecef]">C2C交易资格</h2>
                <p className="mt-3 text-[8px] leading-[10px] text-[#7a8391]">平台实名付款，支付宝小荷包</p>

                <div className="mt-[18px] flex items-center justify-between text-[#eaecef]">
                    <h2 className="text-[11px] font-medium leading-[14px]">广告方信息</h2>
                    <ChevronRight className="size-3 text-[#a0a8b4]" strokeWidth={3} />
                </div>
                <p className="mt-[14px] flex h-[14px] items-center gap-1 text-[10px] leading-[14px] text-[#d5d9df]">
                    <svg viewBox="0 0 16 12" className="h-3 w-4">
                        <circle cx="8" cy="3" r="2.8" fill="#f5c611" />
                        <circle cx="3" cy="4.5" r="1.6" fill="#a7afba" />
                        <circle cx="13" cy="4.5" r="1.6" fill="#a7afba" />
                        <path d="M0 12V9a2 2 0 0 1 2-2h12a2 2 0 0 1 2 2v3z" fill="#8d97a6" />
                        <path d="M5 12V9l3-2 3 2v3z" fill="#f0dca0" />
                    </svg>
                    蟹商贝贝-资金安全-实名零冻
                    <Badge kind="coin" />
                    <Badge kind="shield" />
                </p>
                <dl className="mt-4 flex flex-col gap-1.5">
                    <InfoRow label="30 日成单率 | 计数">
                        100.00 <span className="h-[6px] w-px bg-[#4a525e]" />
                        <span className="rounded-[2px] bg-[#2b333f] px-[3px] text-[7px]">4344</span>
                    </InfoRow>
                    <InfoRow label="30日平均放行时间">1.24 分钟</InfoRow>
                </dl>
            </div>

            <footer className="shrink-0 border-t-2 border-[#2a313c] px-[10px] pb-[5px] pt-[7px]">
                <button className="mb-[22px] block h-7 w-full rounded-[5px] bg-[#2ebd85] text-[11px] font-medium leading-[14px] text-white">下单</button>
                <HomeBar />
            </footer>

            <RedBox className="left-[10px] top-[119px] h-[57px] w-[195px]" />
            <Note className="left-[18px] top-[218px]">你想买多少钱的</Note>
            <Arrows shapes={["154,201 167,213 163,215 208,337 157,218 152,219"]} />
        </Phone>
    );
}

/* ---------- screen 5: order created ---------- */

function OrderScreen() {
    return (
        <Phone time="23:13" label="订单已生成" className="ml-3">
            <div className="relative flex min-h-0 flex-1 flex-col px-[10px]">
                <header className="flex h-[18px] shrink-0 items-center justify-between px-1">
                    <BackButton />
                    <button className="border-b border-dashed border-[#4a525e] text-[9px] leading-[14px] text-[#7a8391]">取消订单</button>
                </header>
                <div className="mt-[14px] grid shrink-0 grid-cols-3 gap-1.5">
                    <span className="h-0.5 bg-white" />
                    <span className="h-0.5 bg-[#3a424e]" />
                    <span className="h-0.5 bg-[#3a424e]" />
                </div>
                <h1 className="mt-[21px] text-[16px] font-medium leading-5 text-white">订单已生成</h1>
                <p className="mt-[5px] text-[8px] leading-[10px] text-[#eaecef]">
                    请在<b className="font-medium">14:44</b>内付款
                </p>

                <div className="mt-[11px] rounded-[9px] border border-[#333b47] px-[10px] pb-[13px] pt-[15px]">
                    <div className="flex h-[17px] items-center">
                        <span className="flex size-[13px] items-center justify-center rounded-[3px] bg-[#eaecef] text-[9px] leading-3 text-[#202630]">蟹</span>
                        <a href="#" className="ml-[3px] border-b border-dashed border-[#5c6673] text-[10px] leading-[14px] text-[#eaecef]">
                            蟹商贝贝-资金安全-实名零冻
                        </a>
                        <button className="relative ml-auto h-[17px] w-[30px] rounded-[4px] bg-[#fdd535] text-[8px] font-medium leading-[10px] text-[#202630]">
                            聊天
                            <span className="absolute -right-[3px] -top-[3px] flex size-2 items-center justify-center rounded-full bg-[#f6465d] text-[6px] font-medium leading-[8px] text-white">
                                2
                            </span>
                        </button>
                    </div>
                    <p className="mt-[7px] flex h-[14px] w-fit items-center gap-[3px] rounded-[3px] bg-[#2b333f] px-[5px] text-[7px] leading-[10px] text-[#d5d9df]">
                        <svg viewBox="0 0 10 10" className="size-1.5">
                            <path d="M.5.5h9v5.5L5 10 .5 6z" fill="#fff" />
                            <path d="M3 3h4L5 6.500z" fill={D} />
                        </svg>
                        托管加密货币
                    </p>
                </div>

                <div className="mt-2 rounded-[9px] border border-[#333b47] px-[10px] pb-[13px] pt-[11px]">
                    <p className="text-[11px] font-medium leading-[14px] text-white">
                        <span className="text-[#2ebd85]">买入</span> USDT
                    </p>
                    <dl className="mt-2 flex flex-col gap-2 text-[10px] leading-3">
                        {[
                            ["总额", "¥ 2,000.00"],
                            ["价格", "¥ 7.21"],
                            ["接收数量", "277.39 USDT"],
                        ].map(([k, v]) => (
                            <div key={k} className="flex justify-between">
                                <dt className="text-[#7a8391]">{k}</dt>
                                <dd className="text-[9px] font-medium text-white">{v}</dd>
                            </div>
                        ))}
                    </dl>
                    <button aria-label="展开" className="mx-auto mt-2 block text-[#a0a8b4]">
                        <ChevronDown className="size-[10px]" strokeWidth={3} />
                    </button>
                </div>

                <div className="mt-[14px] flex items-center justify-between text-[10px] leading-3">
                    <span className="text-[#7a8391]">支付方式</span>
                    <span className="flex items-center gap-1 text-[#eaecef]">
                        <span className="h-[7px] w-0.5 bg-[#02a9f1]" />
                        支付宝
                    </span>
                </div>
                <div className="mt-[10px] flex items-center justify-between pr-1 text-[10px] leading-3 text-[#7a8391]">
                    广告方交易条款
                    <ChevronDown className="size-[10px] text-[#a0a8b4]" strokeWidth={3} />
                </div>

                <button className="absolute bottom-[11px] right-0 flex h-[38px] w-[54px] flex-col items-center justify-center rounded-l-[8px] border border-r-0 border-[#3a424e] text-[7px] leading-[10px] text-[#eaecef]">
                    <span className="mb-1 flex size-3 items-center justify-center rounded-full bg-white text-[9px] font-bold leading-3 text-[#202630]">?</span>
                    帮助
                </button>
            </div>

            <footer className="shrink-0 border-t-2 border-[#2a313c] px-[10px] pb-[5px] pt-[7px]">
                <button className="mb-[22px] block h-7 w-full rounded-[5px] bg-[#fdd535] text-[11px] font-medium leading-[14px] text-[#202630]">
                    查看支付详情
                </button>
                <HomeBar />
            </footer>

            <RedBox className="left-[223px] top-[141px] h-[54px] w-[69px]" />
            <RedBox className="bottom-[23px] left-[90px] h-14 w-[117px]" />
            <Note className="left-[83px] top-[252px]">可以与商家联系好</Note>
            <Arrows
                shapes={["211,195 208,213 204,210 172,240 197,206 194,203", "175,561 176,543 180,546 215,507 188,553 192,556"]}
            />

            <p className="absolute bottom-3 right-[9px] z-30 flex items-center gap-1.5 whitespace-nowrap text-white/75 drop-shadow-[0_1px_1px_rgba(0,0,0,0.6)]">
                <SiBinance className="size-7" />
                <span className="text-[20px] leading-7">@</span>
                <span className="text-[24px] leading-7">注册返佣</span>
            </p>
        </Phone>
    );
}

export default function App() {
    return (
        <main className="flex h-screen flex-col overflow-hidden bg-white font-['Roboto','Noto_Sans_CJK_SC',sans-serif]">
            <div className="h-[5px] shrink-0 bg-[#262626]" />
            <div className="flex min-h-0 flex-1 border-l-2 border-[#262626]">
                <HomeScreen />
                <ServicesScreen />
                <MarketScreen />
                <BuyScreen />
                <OrderScreen />
            </div>
        </main>
    );
}
